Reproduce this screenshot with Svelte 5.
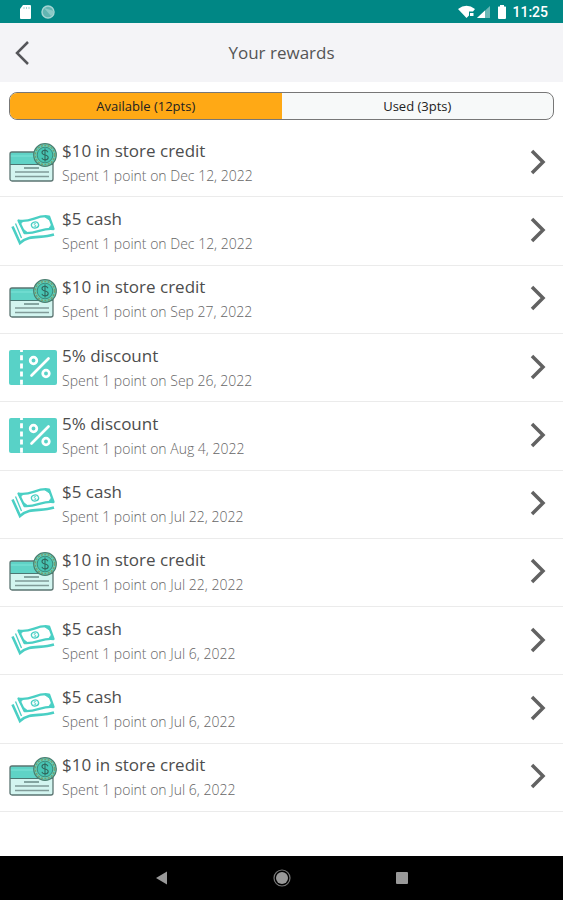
<script>
	let tab = $state('available');

	const names = {
		credit: '$10 in store credit',
		cash: '$5 cash',
		discount: '5% discount'
	};

	const rewards = [
		{ type: 'credit', date: 'Dec 12, 2022' },
		{ type: 'cash', date: 'Dec 12, 2022' },
		{ type: 'credit', date: 'Sep 27, 2022' },
		{ type: 'discount', date: 'Sep 26, 2022' },
		{ type: 'discount', date: 'Aug 4, 2022' },
		{ type: 'cash', date: 'Jul 22, 2022' },
		{ type: 'credit', date: 'Jul 22, 2022' },
		{ type: 'cash', date: 'Jul 6, 2022' },
		{ type: 'cash', date: 'Jul 6, 2022' },
		{ type: 'credit', date: 'Jul 6, 2022' }
	];
</script>

{#snippet creditIcon()}
	<svg class="icon" viewBox="0 0 48 40" aria-hidden="true">
		<rect x="1" y="9" width="43" height="29" rx="2" fill="#d3f5f0" />
		<path d="M1 21.500V11q0-2 2-2h39q2 0 2 2v10.500z" fill="#5fd3c6" />
		<path d="M1 13h43" stroke="#7fe3d8" />
		<path d="M1 21.500h43" stroke="#4b7773" />
		<rect x="1" y="9" width="43" height="29" rx="2" fill="none" stroke="#5b7471" stroke-width="1.3" />
		<path d="M15 25h15" stroke="#4f6f6c" stroke-width="1.2" />
		<path d="M6 29h34M6 33.500h34" stroke="#809b98" stroke-width="1.5" />
		<circle cx="36" cy="12" r="11.3" fill="#5fcfb9" stroke="#4b7e70" stroke-width="1.2" />
		<circle cx="36" cy="12" r="9.6" fill="none" stroke="#7c9c6c" stroke-width="1.4" stroke-dasharray="2 1.4" />
		<circle cx="36" cy="12" r="7.8" fill="#48c5b4" stroke="#3e8c7d" />
		<path d="M39 9.300q-1-2-3-2-3 0-3 2.300 0 1.800 3 2.400 3.200.6 3.200 2.600 0 2.300-3.200 2.300-2.400 0-3.200-2M36 5.500v13" fill="none" stroke="#31685e" stroke-width="1.100" />
	</svg>
{/snippet}

{#snippet cashIcon()}
	<svg class="icon" viewBox="0 0 48 40" fill="none" stroke="#4acfc4" aria-hidden="true">
		<path d="M9.500 9.500c12 3 19-6.500 30.500-4l4.500 12.500c-11-1.500-17 5-29 4z" stroke-width="2.300" stroke-linejoin="round" />
		<path d="M9.500 9.500l5 .3-3.600 4zM40 5.500l-4.500.2 5.800 4zM15.500 22l-2.200-4.500 5.500 4.200zM44.500 18l-1.800-4.500-3.200 4.200z" fill="#4acfc4" stroke-width=".8" />
		<ellipse cx="26" cy="14" rx="3.600" ry="3" stroke-width="1.400" transform="rotate(-15 26 14)" />
		<path d="M27.200 12.800q-1.200-.8-2 0t.8 1.300.9 1.300-2.200.2" stroke-width=".8" />
		<path d="M3.500 15.500l7.500 16.500c10-9 20-4 34-8.500" stroke-width="2.600" />
		<path d="M6.500 12.500l6 14.500" stroke-width="1.300" />
	</svg>
{/snippet}

{#snippet discountIcon()}
	<svg class="icon" viewBox="0 0 48 40" aria-hidden="true">
		<rect x="0" y="2" width="48" height="35" rx="2" fill="#58d2c7" />
		<path d="M12.500 2v35" stroke="#fff" stroke-width="2.800" stroke-dasharray="5 3.200" stroke-dashoffset="3" />
		<g fill="none" stroke="#fff" stroke-width="2.700">
			<circle cx="24.500" cy="12.500" r="3.300" />
			<circle cx="37" cy="25.500" r="3.300" />
			<path d="M39.500 10.500L22.500 27.500" stroke-linecap="round" />
		</g>
	</svg>
{/snippet}

<div class="screen">
	<div class="status">
		<div class="status-side">
			<svg width="14" height="16" viewBox="0 0 14 16" aria-hidden="true">
				<path d="M5 1h7q1 0 1 1v12q0 1-1 1H3q-1 0-1-1V5z" fill="#fff" />
				<path d="M6 3v2M8.500 3v2M11 3v2" stroke="#a5d3d2" />
			</svg>
			<svg width="14" height="16" viewBox="0 0 14 16" aria-hidden="true">
				<circle cx="7" cy="8" r="6" fill="#62b5b2" stroke="#a4d5d3" stroke-width="1.500" />
				<path d="M3 4l7 8A6 6 0 0 0 13 7z" fill="#8bcac7" />
			</svg>
		</div>
		<div class="status-side right">
			<svg width="34" height="16" viewBox="0 0 34 16" aria-hidden="true">
				<path d="M0 5q8.500-6.500 17 0l-2 2.500h-4v4L8.500 14z" fill="#fff" />
				<path d="M12 9h3.500v3H12z" fill="#fff" />
				<path d="M19 14L32 2v12z" fill="#6bb9b7" />
				<path d="M19 14l8-7.400V14z" fill="#fff" />
			</svg>
			<svg width="10" height="16" viewBox="0 0 10 16" aria-hidden="true">
				<path d="M3 1h4v1.500h1.500q.5 0 .5.500v11q0 1-1 1H2q-1 0-1-1V3q0-.5.5-.5H3z" fill="#fff" />
			</svg>
			<span class="clock">11:25</span>
		</div>
	</div>

	<header>
		<button class="back" aria-label="Back">
			<svg width="16" height="26" viewBox="0 0 16 26" aria-hidden="true">
				<path d="M14 2L3 13l11 11" fill="none" stroke="#55565a" stroke-width="2.500" />
			</svg>
		</button>
		<h1>Your rewards</h1>
	</header>

	<main>
		<div class="tabs">
			<button class:active={tab === 'available'} onclick={() => (tab = 'available')}>Available (12pts)</button>
			<button class:active={tab === 'used'} onclick={() => (tab = 'used')}>Used (3pts)</button>
		</div>

		<ul>
			{#each rewards as reward}
				<li>
					<a href="#reward">
						{#if reward.type === 'credit'}
							{@render creditIcon()}
						{:else if reward.type === 'cash'}
							{@render cashIcon()}
						{:else}
							{@render discountIcon()}
						{/if}
						<div class="info">
							<div class="name">{names[reward.type]}</div>
							<div class="spent">Spent 1 point on {reward.date}</div>
						</div>
						<svg width="18" height="28" viewBox="0 0 18 28" aria-hidden="true">
							<path d="M3 2l11 11L3 24" fill="none" stroke="#626262" stroke-width="3.500" />
						</svg>
					</a>
				</li>
			{/each}
		</ul>
	</main>

	<nav>
		<button aria-label="Back">
			<svg width="20" height="20" viewBox="0 0 20 20" aria-hidden="true">
				<path d="M4 10l11-6.500v13z" fill="#999" />
			</svg>
		</button>
		<button aria-label="Home">
			<svg width="20" height="20" viewBox="0 0 20 20" aria-hidden="true">
				<circle cx="10" cy="10" r="6" fill="#999" />
				<circle cx="10" cy="10" r="8" fill="none" stroke="#777" stroke-width="1.200" />
			</svg>
		</button>
		<button aria-label="Overview">
			<svg width="20" height="20" viewBox="0 0 20 20" aria-hidden="true">
				<rect x="4" y="4" width="12" height="12" rx="1" fill="#999" />
			</svg>
		</button>
	</nav>
</div>

<style>
	:global(body) {
		background: #fff;
	}
	.screen {
		display: flex;
		flex-direction: column;
		min-height: 100vh;
		font-family: 'Open Sans', 'Noto Sans', sans-serif;
		color: #555;
	}
	button {
		padding: 0;
		border: none;
		background: none;
		font: inherit;
		color: inherit;
		cursor: pointer;
	}
	svg {
		display: block;
		flex: none;
	}
	.status {
		display: flex;
		justify-content: space-between;
		align-items: center;
		height: 23px;
		padding: 0 15px 0 18px;
		background: #008785;
		color: #fff;
	}
	.status-side {
		display: flex;
		align-items: center;
		gap: 9px;
	}
	.right {
		gap: 5px;
	}
	.clock {
		font-family: Roboto, sans-serif;
		font-size: 14px;
		font-weight: 500;
		line-height: 16px;
	}
	header {
		display: grid;
		grid-template-columns: 48px 1fr 48px;
		align-items: center;
		height: 59px;
		background: #f4f4f7;
	}
	.back {
		padding-left: 14px;
	}
	h1 {
		margin: 0;
		font-size: 17px;
		font-weight: 400;
		line-height: 24px;
		text-align: center;
	}
	main {
		display: flex;
		flex: 1;
		flex-direction: column;
		padding: 10px 0 44px;
	}
	.tabs {
		display: flex;
		height: 28px;
		box-sizing: border-box;
		margin: 0 9px 9px;
		border: 1px solid #777;
		border-radius: 8px;
		overflow: hidden;
		background: #f7f9f9;
		font-size: 13px;
		color: #222;
	}
	.tabs button {
		flex: 1;
	}
	.tabs .active {
		background: #ffa915;
	}
	ul {
		display: grid;
		flex: 1;
		grid-auto-rows: 1fr;
		margin: 0;
		padding: 0;
		list-style: none;
	}
	li {
		display: grid;
		border-bottom: 1px solid #ebebeb;
	}
	a {
		display: flex;
		align-items: center;
		padding: 0 16px 0 9px;
		color: inherit;
		text-decoration: none;
	}
	.icon {
		width: 48px;
		height: 40px;
	}
	.info {
		flex: 1;
		padding-left: 5px;
	}
	.name {
		font-size: 17px;
		line-height: 25px;
		color: #4d4d4d;
	}
	.spent {
		font-size: 14px;
		font-weight: 300;
		line-height: 25px;
		color: #666;
	}
	nav {
		display: flex;
		justify-content: center;
		align-items: center;
		gap: 100px;
		height: 44px;
		background: #000;
	}
</style>
